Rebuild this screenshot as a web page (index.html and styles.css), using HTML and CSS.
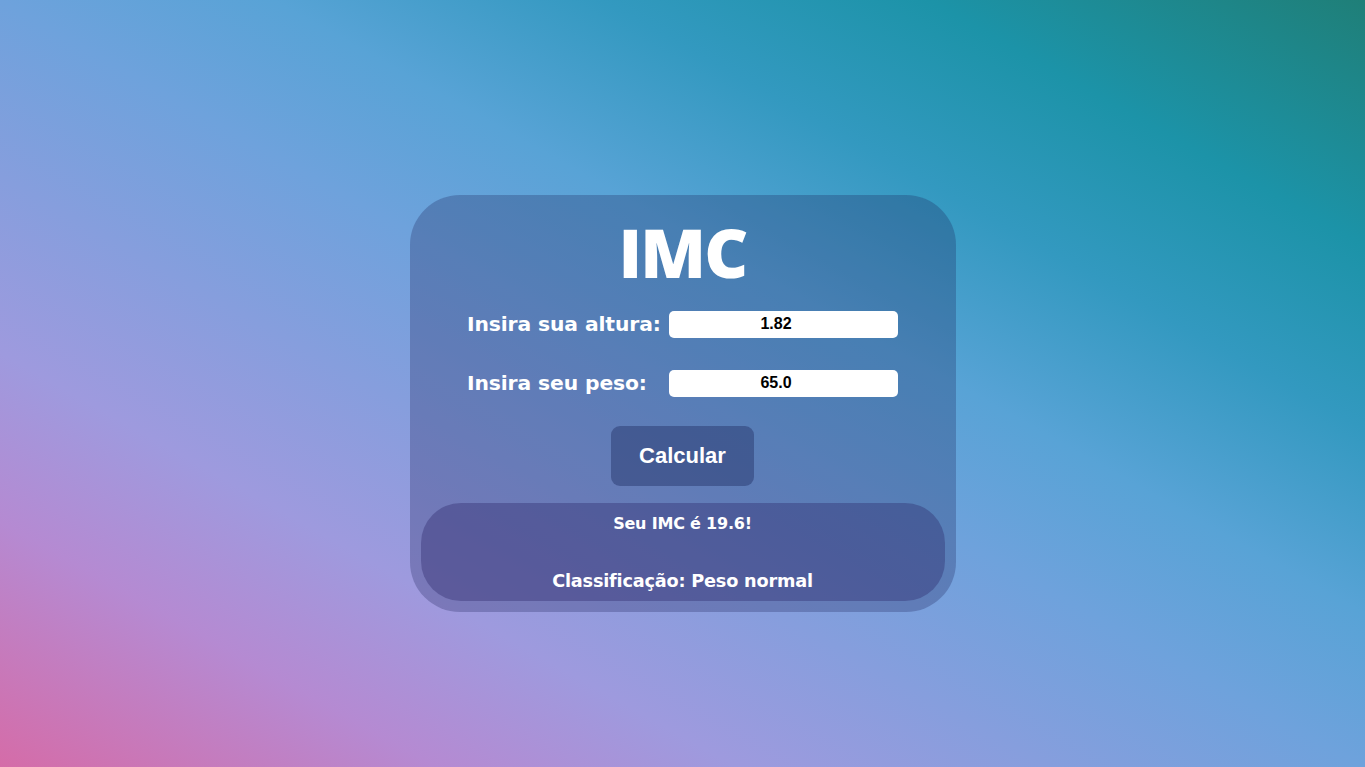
FILE: index.html
```html
<!DOCTYPE html>
<html lang="pt-BR">
<head>
<meta charset="utf-8">
<title>IMC</title>
<link rel="stylesheet" href="styles.css">
</head>
<body>
<main class="page">
  <section class="card">
    <h1 class="title">IMC</h1>
    <div class="row">
      <label class="label" for="altura">Insira sua altura:</label>
      <input class="field" id="altura" type="text" value="1.82">
    </div>
    <div class="row row-second">
      <label class="label" for="peso">Insira seu peso:</label>
      <input class="field" id="peso" type="text" value="65.0">
    </div>
    <button class="btn" type="button">Calcular</button>
    <div class="result">
      <p class="result-imc">Seu IMC é 19.6!</p>
      <p class="result-class">Classificação: Peso normal</p>
    </div>
  </section>
</main>
</body>
</html>
```

FILE: styles.css
```css
* { box-sizing: border-box; }

html, body {
  margin: 0;
  padding: 0;
  height: 100%;
}

body {
  background: linear-gradient(to top right,
    #d56ca8 0%,
    #b58ad2 16%,
    #9e9ade 27%,
    #6ea2dc 50%,
    #58a3d6 60%,
    #3399c0 72%,
    #1c93a8 84%,
    #1f7f78 100%);
  font-family: "DejaVu Sans", "Open Sans", sans-serif;
  color: #fff;
}

.page {
  height: 100vh;
  display: flex;
  align-items: center;
  justify-content: center;
}

.card {
  width: 546px;
  height: 417px;
  margin-top: 39px;
  border-radius: 50px;
  background: rgba(25, 30, 85, 0.27);
  display: flex;
  flex-direction: column;
  align-items: center;
  padding: 17px 11px 11px;
}

.title {
  margin: 0;
  font-family: "Open Sans", sans-serif;
  font-size: 68px;
  line-height: 80px;
  font-weight: 800;
  letter-spacing: -1.8px;
  height: 87px;
}

.row {
  display: flex;
  align-items: center;
  width: 431px;
  gap: 1px;
  height: 27px;
  margin-top: 12px;
}

.row-second {
  margin-top: 32px;
}

.label {
  width: 201px;
  font-size: 20.3px;
  font-weight: 700;
  letter-spacing: -0.1px;
  white-space: nowrap;
}

.field {
  width: 229px;
  height: 27px;
  border: none;
  border-radius: 5px;
  background: #fff;
  text-align: center;
  font-family: "Liberation Sans", Arial, sans-serif;
  font-weight: 700;
  font-size: 16px;
  color: #000;
  padding: 0 15px 0 0;
}

.btn {
  margin-top: 29px;
  width: 143px;
  height: 60px;
  border: none;
  border-radius: 9px;
  background: rgba(40, 55, 110, 0.5);
  color: #fff;
  font-family: "Liberation Sans", Arial, sans-serif;
  font-weight: 700;
  font-size: 22px;
}

.result {
  margin-top: 17px;
  width: 524px;
  height: 98px;
  border-radius: 40px;
  background: rgba(40, 35, 100, 0.35);
  display: flex;
  flex-direction: column;
  align-items: center;
  padding-top: 9px;
}

.result p {
  margin: 0;
  font-weight: 700;
  letter-spacing: -0.2px;
}

.result-imc {
  font-size: 16px;
  line-height: 24px;
}

.result-class {
  margin-top: 33px !important;
  font-size: 17.7px;
  line-height: 24px;
}
```
